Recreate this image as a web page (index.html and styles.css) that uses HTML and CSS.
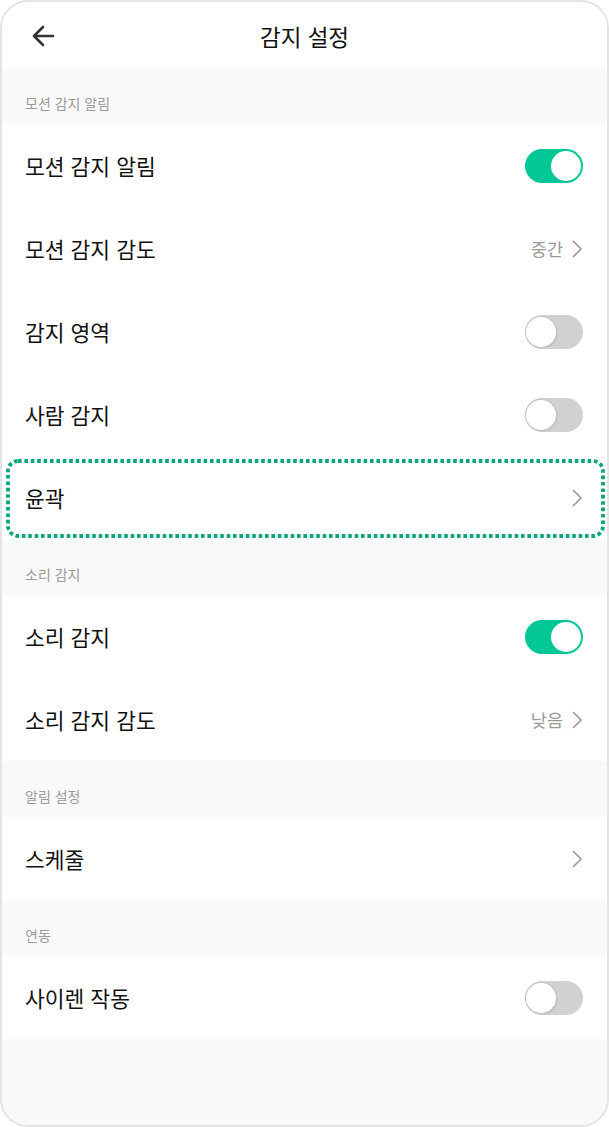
FILE: index.html
```html
<!DOCTYPE html>
<html lang="ko">
<head>
<meta charset="utf-8">
<title>감지 설정</title>
<link rel="stylesheet" href="styles.css">
</head>
<body>
<div class="frame">
  <header class="topbar">
    <div class="back">
      <svg width="26" height="26" viewBox="0 0 26 26"><path d="M23 13H4M13 4l-9 9 9 9" fill="none" stroke="#333" stroke-width="2.6" stroke-linecap="round" stroke-linejoin="round"/></svg>
    </div>
    <h1 class="title">감지 설정</h1>
    <div></div>
  </header>

  <div class="section">모션 감지 알림</div>
  <div class="row"><span class="label">모션 감지 알림</span><span class="toggle on"></span></div>
  <div class="row"><span class="label">모션 감지 감도</span><span class="value">중간<svg class="chev" width="12" height="20" viewBox="0 0 12 20"><path d="M2 2l8 8-8 8" fill="none" stroke="#999" stroke-width="1.6"/></svg></span></div>
  <div class="row"><span class="label">감지 영역</span><span class="toggle"></span></div>
  <div class="row"><span class="label">사람 감지</span><span class="toggle"></span></div>
  <div class="row highlight"><span class="label">윤곽</span><span class="value"><svg class="chev" width="12" height="20" viewBox="0 0 12 20"><path d="M2 2l8 8-8 8" fill="none" stroke="#999" stroke-width="1.6"/></svg></span>
    <svg class="dots" width="599" height="80" viewBox="0 0 599 80"><rect x="2" y="2" width="595" height="75" rx="10" fill="none" stroke="#09a57c" stroke-width="3.8" stroke-dasharray="3.6 2.8"/></svg>
  </div>

  <div class="section">소리 감지</div>
  <div class="row"><span class="label">소리 감지</span><span class="toggle on"></span></div>
  <div class="row"><span class="label">소리 감지 감도</span><span class="value">낮음<svg class="chev" width="12" height="20" viewBox="0 0 12 20"><path d="M2 2l8 8-8 8" fill="none" stroke="#999" stroke-width="1.6"/></svg></span></div>

  <div class="section">알림 설정</div>
  <div class="row"><span class="label">스케줄</span><span class="value"><svg class="chev" width="12" height="20" viewBox="0 0 12 20"><path d="M2 2l8 8-8 8" fill="none" stroke="#999" stroke-width="1.6"/></svg></span></div>

  <div class="section">연동</div>
  <div class="row"><span class="label">사이렌 작동</span><span class="toggle"></span></div>

  <div class="rest"></div>
</div>
</body>
</html>
```

FILE: styles.css
```css
* { box-sizing: border-box; }
html, body { margin: 0; padding: 0; background: #fff; }
body {
  font-family: "Noto Sans CJK KR", "Noto Sans", sans-serif;
  color: #111;
}
.frame {
  width: 609px;
  height: 1127px;
  border: 2px solid #e4e4e4;
  border-radius: 28px;
  overflow: hidden;
  display: flex;
  flex-direction: column;
  background: #f9f9f9;
}
.topbar {
  height: 66px;
  flex: none;
  background: #fff;
  display: grid;
  grid-template-columns: 1fr auto 1fr;
  align-items: center;
  padding: 2px 0 0 0;
}
.back { padding-left: 28px; display: flex; align-items: center; }
.title {
  margin: 0;
  font-size: 22.5px;
  font-weight: 400;
  color: #111;
  line-height: 1;
}
.section {
  height: 56px;
  flex: none;
  padding: 14px 23px 0;
  display: flex;
  align-items: center;
  font-size: 14px;
  color: #9a9a9a;
  background: #f9f9f9;
}
.row {
  height: 83px;
  flex: none;
  background: #fff;
  padding: 0 24px 0 23px;
  display: flex;
  align-items: center;
  justify-content: space-between;
  position: relative;
}
.label { font-size: 21.5px; color: #111; }
.value {
  display: flex;
  align-items: center;
  gap: 8px;
  font-size: 17.5px;
  color: #999;
}
.chev { display: block; }
.toggle {
  width: 58px;
  height: 34px;
  border-radius: 17px;
  background: #d1d1d1;
  position: relative;
}
.toggle::after {
  content: "";
  position: absolute;
  top: 2px;
  left: 1px;
  width: 30px;
  height: 30px;
  border-radius: 50%;
  background: #fff;
  box-shadow: 0 0 0 1px #c4c4c4, 1px 1px 2px rgba(0,0,0,0.15);
}
.toggle.on { background: #00c795; }
.toggle.on::after { left: auto; right: 2px; box-shadow: none; }
.dots {
  position: absolute;
  left: 4px;
  top: 3px;
  pointer-events: none;
}
.rest { flex: 1; background: #f9f9f9; }
```
